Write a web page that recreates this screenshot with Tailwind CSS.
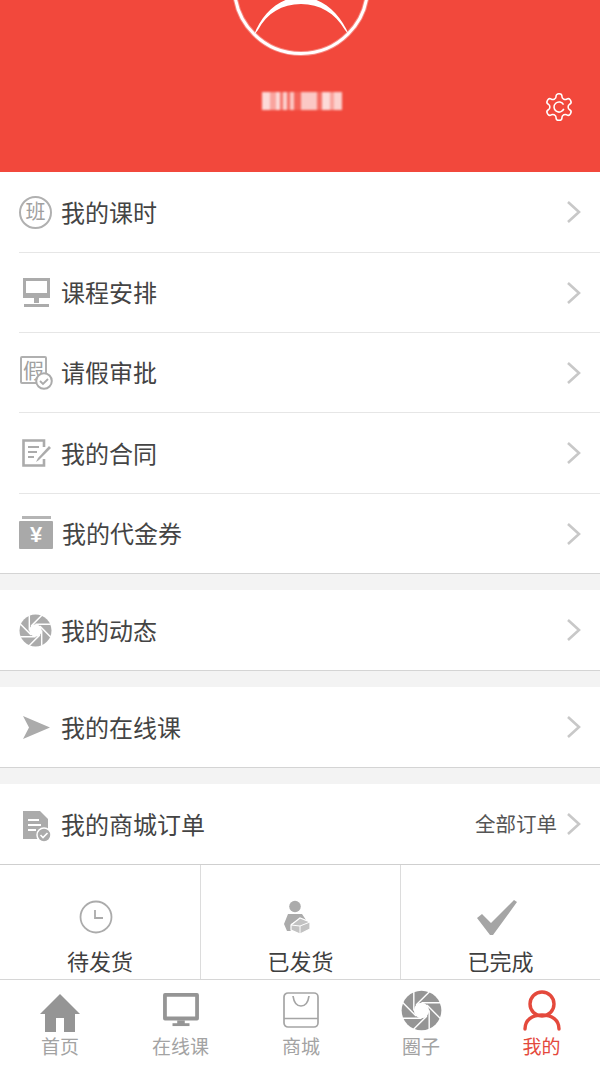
<!DOCTYPE html>
<html lang="zh">
<head>
<meta charset="utf-8">
<script src="https://cdn.jsdelivr.net/npm/@tailwindcss/browser@4"></script>
</head>
<body class="bg-white">
<div class="w-[600px] h-[1067px] overflow-hidden flex flex-col bg-white text-[#444] font-['Liberation_Sans','Noto_Sans_CJK_SC',sans-serif]">

  <header class="relative h-[172px] shrink-0 bg-[#f2483c]">
    <svg class="absolute left-[230px] top-0" width="142" height="60" viewBox="0 0 142 60" fill="none">
      <circle cx="71" cy="-13" r="66.5" stroke="#fff" stroke-opacity=".35" stroke-width="5"/>
      <circle cx="71" cy="-13" r="66.5" stroke="#fff" stroke-width="3"/>
      <path d="M24 35C32 13 50 -3 71 -3C92 -3 110 13 119 35L115 30C105 13 90 4 71 4C52 4 37 13 28 30Z" fill="#fff"/>
    </svg>
    <div class="absolute left-[262px] top-[92px] flex h-[18px] blur-[1px]">
      <div class="w-[8px] h-full bg-white/80"></div>
      <div class="w-[6px] h-full bg-white/50"></div>
      <div class="w-[4px] h-full bg-white/80"></div>
      <div class="w-[3px] h-full bg-white/25"></div>
      <div class="w-[4px] h-full bg-white/75"></div>
      <div class="w-[3px] h-full bg-white/20"></div>
      <div class="w-[4px] h-full bg-white/70"></div>
      <div class="w-[7px] h-full bg-white/15"></div>
      <div class="w-[16px] h-full bg-white/70"></div>
      <div class="w-[5px] h-full bg-white/20"></div>
      <div class="w-[8px] h-full bg-white/80"></div>
      <div class="w-[4px] h-full bg-white/50"></div>
      <div class="w-[8px] h-full bg-white/75"></div>
    </div>
    <svg class="absolute left-[543px] top-[91px]" width="32" height="32" viewBox="0 0 24 24" fill="none" stroke="#fff" stroke-width="1.15" stroke-linejoin="round">
      <path d="M12.22 2h-.44a2 2 0 0 0-2 2v.18a2 2 0 0 1-1 1.73l-.43.25a2 2 0 0 1-2 0l-.15-.08a2 2 0 0 0-2.73.73l-.22.38a2 2 0 0 0 .73 2.73l.15.1a2 2 0 0 1 1 1.72v.51a2 2 0 0 1-1 1.74l-.15.09a2 2 0 0 0-.73 2.73l.22.38a2 2 0 0 0 2.73.73l.15-.08a2 2 0 0 1 2 0l.43.25a2 2 0 0 1 1 1.73V20a2 2 0 0 0 2 2h.44a2 2 0 0 0 2-2v-.18a2 2 0 0 1 1-1.73l.43-.25a2 2 0 0 1 2 0l.15.08a2 2 0 0 0 2.73-.73l.22-.39a2 2 0 0 0-.73-2.73l-.15-.08a2 2 0 0 1-1-1.74v-.5a2 2 0 0 1 1-1.74l.15-.09a2 2 0 0 0 .73-2.73l-.22-.38a2 2 0 0 0-2.73-.73l-.15.08a2 2 0 0 1-2 0l-.43-.25a2 2 0 0 1-1-1.73V4a2 2 0 0 0-2-2z"/>
      <path d="M15.4 10.2A3.8 3.8 0 1 0 15.6 13.4"/>
    </svg>
  </header>

  <main class="flex flex-col">
    <section class="flex flex-col">
      <a class="h-[80px] flex items-center pl-[19px] pr-[18px]">
        <div class="w-[33px] h-[33px] mr-[10px] rounded-full border-2 border-[#b0b0b0] flex items-center justify-center text-[20px] text-[#a0a0a0] leading-none">班</div>
        <span class="flex-1 text-[24px] mt-[3px] ml-[-1px]">我的课时</span>
        <svg width="16" height="24" viewBox="0 0 16 24" fill="none" stroke="#c8c8c8" stroke-width="2.6"><path d="M2 2l11 10L2 22"/></svg>
      </a>
      <div class="h-[1px] ml-[19px] bg-[#e6e6e6]"></div>
      <a class="h-[79px] flex items-center pl-[19px] pr-[18px]">
        <svg class="mr-[10px]" width="33" height="33" viewBox="0 0 33 33"><path fill-rule="evenodd" d="M4 2h27v20H4zM7 5v12h21V5z" fill="#ababab"/><rect x="15" y="22" width="5" height="5" fill="#ababab"/><rect x="5" y="28" width="25" height="3" fill="#ababab"/></svg>
        <span class="flex-1 text-[24px] mt-[3px] ml-[-1px]">课程安排</span>
        <svg width="16" height="24" viewBox="0 0 16 24" fill="none" stroke="#c8c8c8" stroke-width="2.6"><path d="M2 2l11 10L2 22"/></svg>
      </a>
      <div class="h-[1px] ml-[19px] bg-[#e6e6e6]"></div>
      <a class="h-[79px] flex items-center pl-[19px] pr-[18px]">
        <div class="relative w-[33px] h-[33px] mr-[10px]">
          <div class="absolute left-[1px] top-0 w-[27px] h-[28px] border-2 border-[#b0b0b0] rounded-[2px] flex items-center justify-center text-[21px] leading-none text-[#a0a0a0]">假</div>
          <svg class="absolute right-[-1px] bottom-[-1px]" width="18" height="18" viewBox="0 0 18 18"><circle cx="9" cy="9" r="7.8" fill="#fff" stroke="#ababab" stroke-width="2"/><path d="M5 9l3 3 5-5" fill="none" stroke="#ababab" stroke-width="1.8"/></svg>
        </div>
        <span class="flex-1 text-[24px] mt-[3px] ml-[-1px]">请假审批</span>
        <svg width="16" height="24" viewBox="0 0 16 24" fill="none" stroke="#c8c8c8" stroke-width="2.6"><path d="M2 2l11 10L2 22"/></svg>
      </a>
      <div class="h-[1px] ml-[19px] bg-[#e6e6e6]"></div>
      <a class="h-[80px] flex items-center pl-[19px] pr-[18px]">
        <svg class="mr-[10px]" width="33" height="33" viewBox="0 0 33 33" fill="none" stroke="#ababab"><path d="M25 10V3.5H4.5v25H25V22" stroke-width="2.6"/><path d="M9 10h11M9 15h9M9 20h6" stroke-width="2.2"/><path d="M17 25l2-4L30 9l2 2-12 12z" fill="#ababab" stroke="none"/></svg>
        <span class="flex-1 text-[24px] mt-[3px] ml-[-1px]">我的合同</span>
        <svg width="16" height="24" viewBox="0 0 16 24" fill="none" stroke="#c8c8c8" stroke-width="2.6"><path d="M2 2l11 10L2 22"/></svg>
      </a>
      <div class="h-[1px] ml-[19px] bg-[#e6e6e6]"></div>
      <a class="h-[79px] flex items-center pl-[19px] pr-[18px]">
        <div class="w-[34px] mr-[10px] flex flex-col items-center mt-[-2px]">
          <div class="w-[29px] h-[3px] bg-[#b5b5b5] mb-[2px]"></div>
          <div class="w-[34px] h-[28px] bg-[#a9a9a9] rounded-[1px] flex items-center justify-center text-[22px] font-bold text-white leading-none">¥</div>
        </div>
        <span class="flex-1 text-[24px] mt-[3px] ml-[-1px]">我的代金券</span>
        <svg width="16" height="24" viewBox="0 0 16 24" fill="none" stroke="#c8c8c8" stroke-width="2.6"><path d="M2 2l11 10L2 22"/></svg>
      </a>
    </section>
    <div class="h-[17px] bg-[#f3f3f3] border-t border-[#d4d4d4]"></div>

    <a class="h-[80px] flex items-center pl-[19px] pr-[18px]">
      <svg class="mr-[10px]" width="33" height="33" viewBox="0 0 32 32">
        <circle cx="16" cy="16" r="15.5" fill="#ababab"/>
        <path d="M22 16V30.8M20.24 20.24L9.8 30.7M16 22H1.2M11.76 20.24L1.3 9.8M10 16V1.2M11.76 11.76L22.2 1.3M16 10H30.8M20.24 11.76L30.7 22.2" stroke="#fff" stroke-width="1.4" fill="none"/>
        <circle cx="16" cy="16" r="6" fill="#fff"/>
      </svg>
      <span class="flex-1 text-[24px] mt-[3px] ml-[-1px]">我的动态</span>
      <svg width="16" height="24" viewBox="0 0 16 24" fill="none" stroke="#c8c8c8" stroke-width="2.6"><path d="M2 2l11 10L2 22"/></svg>
    </a>
    <div class="h-[17px] bg-[#f3f3f3] border-t border-[#d4d4d4]"></div>

    <a class="h-[80px] flex items-center pl-[19px] pr-[18px]">
      <svg class="mr-[10px]" width="33" height="33" viewBox="0 0 33 33"><path d="M4 5l27 11.5L4 28l6-11.5z" fill="#ababab"/></svg>
      <span class="flex-1 text-[24px] mt-[3px] ml-[-1px]">我的在线课</span>
      <svg width="16" height="24" viewBox="0 0 16 24" fill="none" stroke="#c8c8c8" stroke-width="2.6"><path d="M2 2l11 10L2 22"/></svg>
    </a>
    <div class="h-[17px] bg-[#f3f3f3] border-t border-[#d4d4d4]"></div>

    <a class="h-[80px] flex items-center pl-[19px] pr-[18px]">
      <svg class="mr-[10px] mt-[3px]" width="33" height="33" viewBox="0 0 33 33">
        <path d="M4 2h17l8 8v20H4z" fill="#ababab"/>
        <path d="M9 11h11M9 16h13M9 21h8" stroke="#fff" stroke-width="2"/>
        <circle cx="25" cy="26" r="7" fill="#ababab" stroke="#fff" stroke-width="1.5"/>
        <path d="M21.5 26l2.5 2.5 4.5-4.5" fill="none" stroke="#fff" stroke-width="1.6"/>
      </svg>
      <span class="flex-1 text-[24px] mt-[3px] ml-[-1px]">我的商城订单</span>
      <span class="text-[20.5px] text-[#555] mr-[9px] mt-[3px]">全部订单</span>
      <svg width="16" height="24" viewBox="0 0 16 24" fill="none" stroke="#c8c8c8" stroke-width="2.6"><path d="M2 2l11 10L2 22"/></svg>
    </a>

    <section class="h-[115px] grid grid-cols-[201px_200px_199px] border-t border-[#cfcfcf]">
      <div class="flex flex-col items-center justify-end border-r border-[#dcdcdc]">
        <svg width="34" height="34" viewBox="0 0 34 34" fill="none" stroke="#ababab" class="mb-[12px] mr-[8px]"><circle cx="17" cy="17" r="15.5" stroke-width="1.8"/><path d="M16 10v8h8" stroke-width="1.8"/></svg>
        <span class="text-[22px] text-[#3f3f3f] leading-[33px]">待发货</span>
      </div>
      <div class="flex flex-col items-center justify-end border-r border-[#dcdcdc]">
        <svg width="34" height="36" viewBox="0 0 34 36" class="mb-[10px] mr-[8px]"><circle cx="15" cy="6.5" r="5.8" fill="#ababab"/><path d="M8 14h14l4 6H18l-7 4 2 7-6 0-3-7z" fill="#ababab"/><path d="M11 25l9-7 10 4v7l-10 5-9-4z" fill="#c2c2c2" stroke="#fff" stroke-width="1.2"/><path d="M20 26v8M11 25l9 1 10-4" stroke="#fff" stroke-width="1" fill="none"/></svg>
        <span class="text-[22px] text-[#3f3f3f] leading-[33px]">已发货</span>
      </div>
      <div class="flex flex-col items-center justify-end">
        <svg width="42" height="36" viewBox="0 0 42 36" class="mb-[10px] mr-[8px]"><path d="M1 18l5-4 9 9L38 0l3 2-24 33h-3z" fill="#a5a5a5"/></svg>
        <span class="text-[22px] text-[#3f3f3f] leading-[33px]">已完成</span>
      </div>
    </section>
  </main>

  <nav class="h-[88px] shrink-0 border-t border-[#d6d6d6] grid grid-cols-[120px_121px_120px_120px_121px] text-[19px] text-[#a3a3a3] bg-white">
    <div class="flex flex-col items-center">
      <div class="h-[54px] pt-[14px]"><svg width="42" height="38" viewBox="0 0 42 38"><path d="M21 0L41 20H36V38H25V24H17V38H6V20H1z" fill="#959595"/></svg></div>
      <span class="leading-[28px]">首页</span>
    </div>
    <div class="flex flex-col items-center">
      <div class="h-[54px] pt-[13px]"><svg width="36" height="34" viewBox="0 0 38 36"><path fill-rule="evenodd" d="M2 0h34a2 2 0 0 1 2 2v25a2 2 0 0 1-2 2H2a2 2 0 0 1-2-2V2a2 2 0 0 1 2-2zM4 4v21h30V4z" fill="#959595"/><rect x="15" y="29" width="8" height="4" fill="#959595"/><rect x="10" y="32" width="18" height="3" fill="#959595"/></svg></div>
      <span class="leading-[28px]">在线课</span>
    </div>
    <div class="flex flex-col items-center">
      <div class="h-[54px] pt-[12px]"><svg width="36" height="36" viewBox="0 0 36 36" fill="none" stroke="#a5a5a5" stroke-width="1.7"><rect x="1" y="1" width="34" height="34" rx="4"/><path d="M1 26.5h34M10 4c1 7 4 10 8 10s7-3 8-10"/></svg></div>
      <span class="leading-[28px]">商城</span>
    </div>
    <div class="flex flex-col items-center">
      <div class="h-[54px] pt-[10px]"><svg width="41" height="41" viewBox="0 0 32 32">
        <circle cx="16" cy="16" r="15.5" fill="#959595"/>
        <path d="M22 16V30.8M20.24 20.24L9.8 30.7M16 22H1.2M11.76 20.24L1.3 9.8M10 16V1.2M11.76 11.76L22.2 1.3M16 10H30.8M20.24 11.76L30.7 22.2" stroke="#fff" stroke-width="1.1" fill="none"/>
        <circle cx="16" cy="16" r="6" fill="#fff"/>
      </svg></div>
      <span class="leading-[28px]">圈子</span>
    </div>
    <div class="flex flex-col items-center text-[#e4493c]">
      <div class="h-[54px] pt-[10px]"><svg width="38" height="41" viewBox="0 0 38 41" fill="none" stroke="#e4493c" stroke-width="3.4"><circle cx="19" cy="14" r="12"/><path d="M2 39c0-9 7-14 17-14s17 5 17 14" stroke-linecap="round"/></svg></div>
      <span class="leading-[28px]">我的</span>
    </div>
  </nav>
</div>
</body>
</html>
